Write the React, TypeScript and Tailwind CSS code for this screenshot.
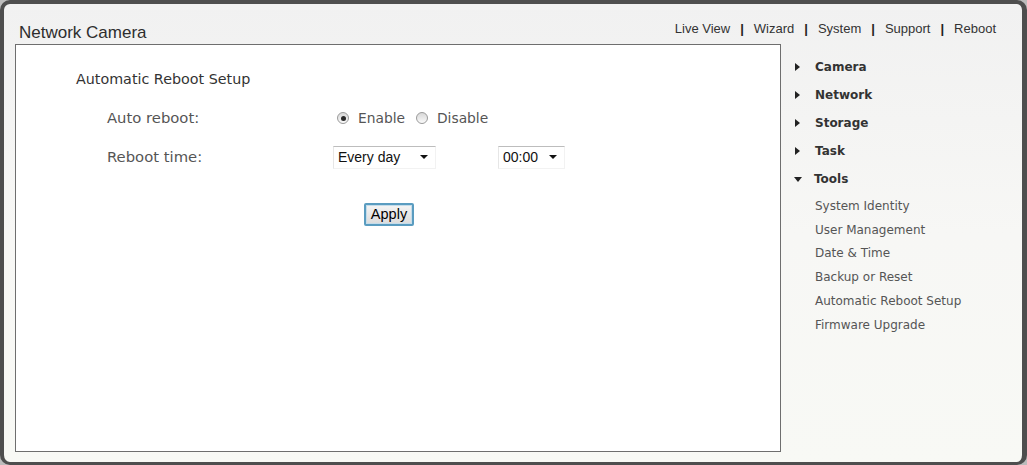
const LINKS = ['Live View', 'Wizard', 'System', 'Support', 'Reboot'];
const MENU = ['Camera', 'Network', 'Storage', 'Task'];
const TOOLS = [
  'System Identity',
  'User Management',
  'Date & Time',
  'Backup or Reset',
  'Automatic Reboot Setup',
  'Firmware Upgrade',
];

function Radio({ checked }: { checked?: boolean }) {
  return (
    <span className="w-[12px] h-[12px] rounded-full border border-[#9a9a9a] bg-gradient-to-b from-[#d8d8d8] to-[#fafafa] flex items-center justify-center shrink-0">
      {checked && <span className="w-[5px] h-[5px] rounded-full bg-[#2a2a2a]" />}
    </span>
  );
}

function Select({ value, width }: { value: string; width: string }) {
  return (
    <div
      className={`${width} h-[23px] flex items-center justify-between pl-[4px] pr-[7px] bg-white border-t border-l border-t-[#bdbdbd] border-l-[#e6e6e6] border-b border-r border-b-[#f2f2f2] border-r-[#f2f2f2] text-[14px] text-[#111] font-['Liberation_Sans',Arial,sans-serif]`}
    >
      <span>{value}</span>
      <span className="w-0 h-0 border-l-[4px] border-r-[4px] border-t-[4px] border-l-transparent border-r-transparent border-t-[#111]" />
    </div>
  );
}

export default function App() {
  return (
    <div className="w-[1027px] h-[465px] bg-[#bcbcbc]">
      <div className="w-full h-full rounded-[10px] border-t-4 border-l-4 border-r-[5px] border-b-[3px] border-[#4e4e4e] bg-gradient-to-b from-[#f1f1f1] via-[#f7f7f5] to-[#f8f9f5] flex flex-col">
        {/* Header */}
        <div className="h-[40px] flex items-end justify-between pl-[15px] pr-[26px] font-['Liberation_Sans',Arial,sans-serif]">
          <span className="text-[17px] text-[#2e2e2e] leading-none pb-[3px]">Network Camera</span>
          <div className="flex items-center text-[13px] text-[#333] leading-none pb-[9px]">
            {LINKS.map((l, i) => (
              <span key={l} className="flex items-center">
                {i > 0 && <span className="mx-[10px] font-bold text-[#222]">|</span>}
                <span>{l}</span>
              </span>
            ))}
          </div>
        </div>

        {/* Body */}
        <div className="flex flex-1 pl-[11px] pb-[10px]">
          <div className="w-[766px] border border-[#6e6e6e] bg-white font-['DejaVu_Sans',Verdana,sans-serif]">
            <div className="pl-[60px] pt-[27px] text-[14.3px] text-[#333] leading-none">Automatic Reboot Setup</div>
            <div className="pl-[91px] pt-[17px] text-[#555]">
              <div className="flex items-center h-[30px]">
                <span className="w-[226px] text-[14.8px]">Auto reboot:</span>
                <span className="ml-[4px] flex items-center text-[13.8px]">
                  <Radio checked />
                  <span className="ml-[9px]">Enable</span>
                  <span className="ml-[11px]"><Radio /></span>
                  <span className="ml-[9px]">Disable</span>
                </span>
              </div>
              <div className="flex items-center h-[30px] mt-[9px]">
                <span className="w-[226px] text-[14.8px]">Reboot time:</span>
                <Select value="Every day" width="w-[103px]" />
                <span className="ml-[62px]">
                  <Select value="00:00" width="w-[67px]" />
                </span>
              </div>
            </div>
            <div className="pl-[348px] pt-[30px]">
              <button className="w-[50px] h-[23px] rounded-[2px] border-2 border-[#5a9cc0] bg-gradient-to-b from-[#f4f4f4] to-[#dcdcdc] text-[14.5px] text-black leading-none font-['Liberation_Sans',Arial,sans-serif] shadow-[inset_0_0_0_1px_#c4dcea]">
                Apply
              </button>
            </div>
          </div>

          {/* Sidebar */}
          <div className="pl-[14px] pt-[9px] font-['DejaVu_Sans',Verdana,sans-serif] text-[12px]">
            {MENU.map((m) => (
              <div key={m} className="h-[28px] flex items-center">
                <span className="w-0 h-0 border-t-[4px] border-b-[4px] border-l-[5px] border-t-transparent border-b-transparent border-l-[#222]" />
                <span className="ml-[15px] font-bold text-[#333]">{m}</span>
              </div>
            ))}
            <div className="h-[28px] flex items-center">
              <span className="w-0 h-0 border-l-[4px] border-r-[4px] border-t-[5px] border-l-transparent border-r-transparent border-t-[#222] -ml-[1px]" />
              <span className="ml-[12px] font-bold text-[#333]">Tools</span>
            </div>
            <div className="pl-[20px] pt-[1px] text-[#555]">
              {TOOLS.map((t) => (
                <div key={t} className="h-[23.8px] flex items-center">{t}</div>
              ))}
            </div>
          </div>
        </div>
      </div>
    </div>
  );
}
